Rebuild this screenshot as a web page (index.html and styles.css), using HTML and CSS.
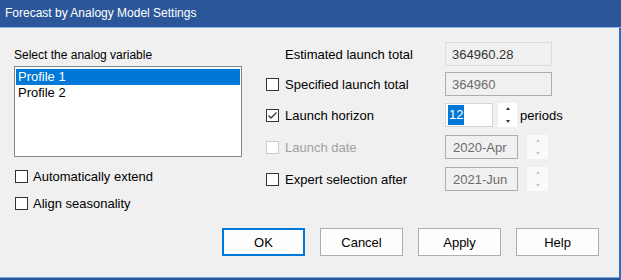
FILE: index.html
```html
<html>

<head>
    <meta http-equiv="Content-Type" content="text/html" charset="utf-8">
    <title>Forecast by Analogy Model Settings</title>
    <link rel="stylesheet" href="styles.css">
</head>

<body>
    <div class="window">
        <div class="titlebar">Forecast by Analogy Model Settings</div>

        <div class="dialog">
            <div class="left-col">
                <div class="caption">Select the analog variable</div>
                <div class="listbox">
                    <div class="list-item selected">Profile 1</div>
                    <div class="list-item">Profile 2</div>
                </div>
                <div class="check-row"><span class="checkbox"></span>Automatically extend</div>
                <div class="check-row"><span class="checkbox"></span>Align seasonality</div>
            </div>

            <div class="right-col">
                <div class="field-row">
                    <span class="check-cell"></span>
                    <span class="label">Estimated launch total</span>
                    <span class="textbox readonly wide">364960.28</span>
                </div>
                <div class="field-row tight">
                    <span class="check-cell"><span class="checkbox"></span></span>
                    <span class="label">Specified launch total</span>
                    <span class="textbox disabled wide">364960</span>
                </div>
                <div class="field-row">
                    <span class="check-cell">
                        <span class="checkbox">
                            <svg width="11" height="11" viewBox="0 0 11 11"><polyline points="1.5,5.5 4,8 9.5,2.5" fill="none" stroke="#333" stroke-width="1.3" /></svg>
                        </span>
                    </span>
                    <span class="label">Launch horizon</span>
                    <span class="textbox edit short"><span class="sel">12</span></span>
                    <span class="spinner"><span class="up"></span><span class="down"></span></span>
                    <span class="unit">periods</span>
                </div>
                <div class="field-row off loose">
                    <span class="check-cell"><span class="checkbox"></span></span>
                    <span class="label">Launch date</span>
                    <span class="textbox disabled date">2020-Apr</span>
                    <span class="spinner wide-spin"><span class="up"></span><span class="down"></span></span>
                </div>
                <div class="field-row loose">
                    <span class="check-cell"><span class="checkbox"></span></span>
                    <span class="label">Expert selection after</span>
                    <span class="textbox disabled date">2021-Jun</span>
                    <span class="spinner wide-spin"><span class="up"></span><span class="down"></span></span>
                </div>
            </div>

            <div class="buttons">
                <button class="btn default">OK</button>
                <button class="btn">Cancel</button>
                <button class="btn">Apply</button>
                <button class="btn">Help</button>
            </div>
        </div>
    </div>
</body>

</html>
```

FILE: styles.css
```css
body {
    margin: 0;
    overflow: hidden;
}

.window {
    width: 621px;
    height: 280px;
    display: flex;
    flex-direction: column;
    background-color: #f0f0f0;
    font-family: 'Liberation Sans', Arial, sans-serif;
    font-size: 13px;
    color: #000;
}

.titlebar {
    height: 28px;
    line-height: 27px;
    padding-left: 5px;
    background-color: #2b579a;
    color: #fff;
    font-size: 12px;
    border-bottom: 1px solid #8fb3e3;
    box-sizing: border-box;
}

.dialog {
    flex: 1;
    display: grid;
    grid-template-columns: 228px 1fr;
    grid-template-rows: auto auto;
    align-content: start;
    column-gap: 24px;
    padding: 14px 20px 0 14px;
    border-right: 2px solid #2b6fc4;
    border-bottom: 2px solid #2b579a;
    box-shadow: inset 0 -1px #6fa8e6;
}

/* left column */
.caption {
    margin-top: 5px;
    line-height: 16px;
    font-size: 12px;
}

.listbox {
    margin-top: 3px;
    height: 91px;
    background-color: #fff;
    border: 1px solid #828790;
    box-sizing: border-box;
    padding: 2px 1px;
}

.list-item {
    height: 16px;
    line-height: 16px;
    padding-left: 2px;
}

.list-item.selected {
    background-color: #0078d7;
    color: #fff;
}

.check-row {
    display: flex;
    align-items: center;
    gap: 5px;
    height: 15px;
    margin-top: 12px;
    padding-left: 1px;
}

.checkbox {
    display: inline-flex;
    align-items: center;
    justify-content: center;
    width: 13px;
    height: 13px;
    box-sizing: border-box;
    border: 1px solid #333;
    background-color: #fff;
}

/* right column */
.right-col {
    display: flex;
    flex-direction: column;
    gap: 7px;
}

.field-row {
    display: flex;
    align-items: center;
    height: 24px;
}

.field-row.tight {
    margin-top: -1px;
}

.field-row.loose {
    margin-top: 1px;
}

.check-cell {
    width: 19px;
    display: flex;
    align-items: center;
}

.label {
    width: 160px;
}

.textbox {
    height: 24px;
    box-sizing: border-box;
    display: flex;
    align-items: center;
    padding-left: 6px;
    border: 1px solid #adadad;
}

.textbox.wide {
    width: 107px;
}

.textbox.readonly {
    border-color: #dcdcdc;
    color: #333;
}

.textbox.disabled {
    color: #6d6d6d;
}

.textbox.date {
    width: 73px;
    padding-left: 7px;
}

.textbox.edit {
    width: 48px;
    background-color: #fff;
    border-color: #d4d4d4;
    padding-left: 2px;
}

.sel {
    background-color: #0078d7;
    color: #fff;
    line-height: 20px;
    padding: 0 1px;
}

.spinner {
    width: 19px;
    height: 24px;
    margin-left: 5px;
    background-color: #fff;
    display: flex;
    flex-direction: column;
    align-items: center;
    justify-content: space-between;
    padding: 4px 0;
    box-sizing: border-box;
}

.spinner .up {
    border: 2.5px solid transparent;
    border-top: 0;
    border-bottom: 3px solid #333;
}

.spinner .down {
    border: 2.5px solid transparent;
    border-bottom: 0;
    border-top: 3px solid #333;
}

.spinner.wide-spin {
    width: 21px;
    margin-left: 9px;
    background-color: #fafafa;
}

.spinner.wide-spin .up {
    border-bottom-color: #c8c8c8;
}

.spinner.wide-spin .down {
    border-top-color: #c8c8c8;
}

.unit {
    margin-left: 3px;
}

.field-row.off .label {
    color: #a0a0a0;
}

.field-row.off .checkbox {
    border-color: #cccccc;
}

/* button bar */
.buttons {
    grid-column: 1 / span 2;
    display: flex;
    justify-content: flex-end;
    gap: 15px;
    margin-top: 17px;
}

.btn {
    width: 83px;
    height: 28px;
    font-family: 'Liberation Sans', Arial, sans-serif;
    font-size: 13px;
    color: #000;
    background-color: #fdfdfd;
    border: 1px solid #adadad;
}

.btn.default {
    border-color: #0078d7;
    box-shadow: inset 0 0 0 1px #0078d7;
}
```
